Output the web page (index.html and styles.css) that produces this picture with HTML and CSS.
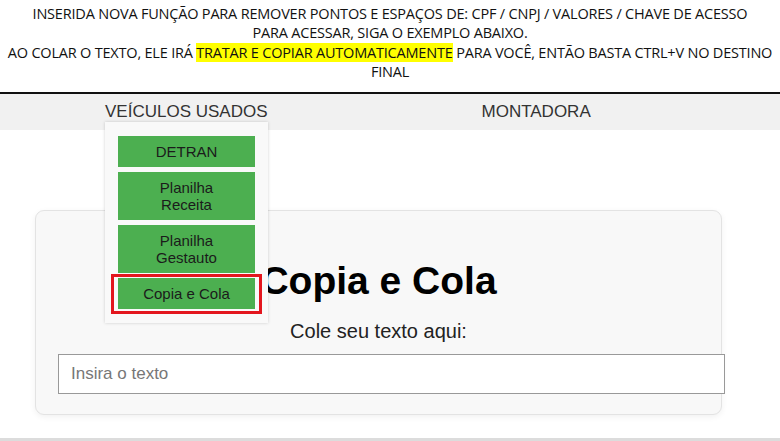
FILE: index.html
```html
<!DOCTYPE html>
<html lang="pt-BR">
<head>
<meta charset="utf-8">
<title>Copia e Cola</title>
<link rel="stylesheet" href="styles.css">
</head>
<body>
<header class="notice">
  <p>INSERIDA NOVA FUNÇÃO PARA REMOVER PONTOS E ESPAÇOS DE: CPF / CNPJ / VALORES / CHAVE DE ACESSO<br>PARA ACESSAR, SIGA O EXEMPLO ABAIXO.<br>AO COLAR O TEXTO, ELE IRÁ <mark class="hl">TRATAR E COPIAR AUTOMATICAMENTE</mark> PARA VOCÊ, ENTÃO BASTA CTRL+V NO DESTINO FINAL</p>
</header>
<nav class="nav">
  <div class="nav-item has-drop">
    <span class="nav-link">VEÍCULOS USADOS</span>
    <div class="dropdown">
      <a class="drop-btn">DETRAN</a>
      <a class="drop-btn">Planilha Receita</a>
      <a class="drop-btn">Planilha Gestauto</a>
      <a class="drop-btn marked">Copia e Cola</a>
    </div>
  </div>
  <div class="nav-item">
    <span class="nav-link">MONTADORA</span>
  </div>
</nav>
<main class="main">
  <section class="card">
    <h1 class="title">Copia e Cola</h1>
    <p class="label">Cole seu texto aqui:</p>
    <input class="field" type="text" placeholder="Insira o texto">
  </section>
</main>
<footer class="foot"></footer>
</body>
</html>
```
FILE: styles.css
```css
* { box-sizing: border-box; }
html, body { margin: 0; padding: 0; background: #fff; }
body { font-family: "Liberation Sans", Arial, sans-serif; color: #000; overflow: hidden; height: 441px; }

.notice {
  height: 94px;
  border-bottom: 2px solid #111;
  padding-top: 4px;
}
.notice p {
  margin: 0;
  text-align: center;
  font-family: "Open Sans", sans-serif;
  font-size: 14.5px;
  line-height: 19.3px;
  letter-spacing: -0.2px;
  color: #111;
}
.hl { background: #ffff00; color: #111; padding: 0; }

.nav {
  display: flex;
  background: #f1f1f1;
  height: 36px;
  padding-left: 105px;
  gap: 214px;
}
.nav-item { position: relative; }
.nav-link {
  display: block;
  line-height: 36px;
  font-size: 17px;
  color: #333;
}
.dropdown {
  position: absolute;
  top: 28px;
  left: 0;
  width: 163px;
  background: #f9f9f9;
  box-shadow: 0 0 3px rgba(0,0,0,0.18);
  padding: 14px 13px;
  display: flex;
  flex-direction: column;
  gap: 5px;
  z-index: 5;
}
.drop-btn {
  display: block;
  background: #4caf50;
  color: #1b1b1b;
  font-size: 15px;
  line-height: 17px;
  text-align: center;
  padding: 7px 18px;
}
.drop-btn.marked { position: relative; }
.drop-btn.marked::after {
  content: "";
  position: absolute;
  left: -7px; right: -7px; top: -4px; bottom: -5px;
  border: 3px solid #e3161e;
}

.main { padding-top: 80px; }
.card {
  margin-left: 35px;
  width: 687px;
  height: 205px;
  background: #f8f8f8;
  border: 1px solid #e3e3e3;
  border-radius: 9px;
  box-shadow: 0 2px 6px rgba(0,0,0,0.06);
  padding: 20px 22px;
  text-align: center;
}
.title {
  margin: 28px 0 0;
  font-size: 39px;
  line-height: 44px;
  font-weight: bold;
  color: #000;
}
.label {
  margin: 16px 0 0;
  font-size: 20px;
  line-height: 24px;
  color: #222;
}
.field {
  display: block;
  margin-top: 11px;
  box-sizing: content-box;
  width: 100%;
  height: 38px;
  padding: 0 12px;
  border: 1px solid #999;
  background: #fff;
  font-family: "Liberation Sans", Arial, sans-serif;
  font-size: 17px;
  text-align: left;
}
.field::placeholder { color: #777; }

.foot {
  position: absolute;
  left: 0; right: 0; top: 438px;
  height: 3px;
  background: #dcdcdc;
}
```
